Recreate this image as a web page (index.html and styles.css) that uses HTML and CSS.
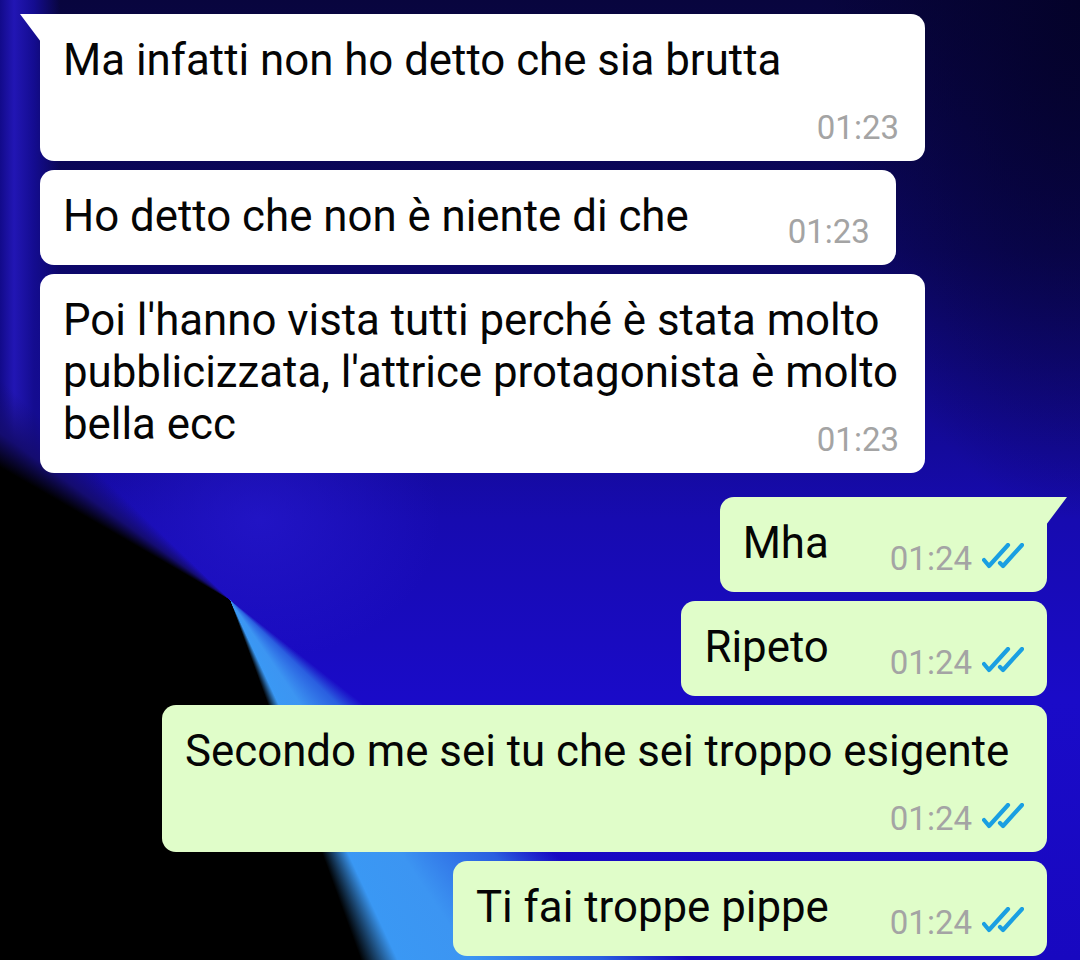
FILE: index.html
```html
<!DOCTYPE html>
<html lang="it">
<head>
    <meta charset="UTF-8">
    <meta name="viewport" content="width=device-width, initial-scale=1.0">
    <title>Chat</title>
    <link rel="stylesheet" href="styles.css">
</head>
<body>
    <div class="chat">
        <div class="row in">
            <div class="bubble tail stacked">
                <span class="text">Ma infatti non ho detto che sia brutta</span>
                <span class="meta"><span class="time">01:23</span></span>
            </div>
        </div>
        <div class="row in">
            <div class="bubble">
                <span class="text">Ho detto che non è niente di che</span>
                <span class="meta"><span class="time">01:23</span></span>
            </div>
        </div>
        <div class="row in">
            <div class="bubble">
                <span class="text">Poi l'hanno vista tutti perché è stata molto pubblicizzata, l'attrice protagonista è molto bella ecc</span>
                <span class="meta"><span class="time">01:23</span></span>
            </div>
        </div>

        <div class="row out first">
            <div class="bubble tail">
                <span class="text">Mha</span>
                <span class="meta"><span class="time">01:24</span><svg class="ticks" viewBox="0 0 42 26"><path d="M2 17 L7 23 L26 2"/><path d="M18 20 L21 23 L40 2"/></svg></span>
            </div>
        </div>
        <div class="row out">
            <div class="bubble">
                <span class="text">Ripeto</span>
                <span class="meta"><span class="time">01:24</span><svg class="ticks" viewBox="0 0 42 26"><path d="M2 17 L7 23 L26 2"/><path d="M18 20 L21 23 L40 2"/></svg></span>
            </div>
        </div>
        <div class="row out">
            <div class="bubble stacked">
                <span class="text">Secondo me sei tu che sei troppo esigente</span>
                <span class="meta"><span class="time">01:24</span><svg class="ticks" viewBox="0 0 42 26"><path d="M2 17 L7 23 L26 2"/><path d="M18 20 L21 23 L40 2"/></svg></span>
            </div>
        </div>
        <div class="row out">
            <div class="bubble">
                <span class="text">Ti fai troppe pippe</span>
                <span class="meta"><span class="time">01:24</span><svg class="ticks" viewBox="0 0 42 26"><path d="M2 17 L7 23 L26 2"/><path d="M18 20 L21 23 L40 2"/></svg></span>
            </div>
        </div>
    </div>
</body>
</html>
```

FILE: styles.css
```css
html, body {
    height: 100%;
}
body {
    margin: 0;
    overflow: hidden;
    font-family: Roboto, "Noto Sans", sans-serif;
    background:
        /* black area and light blue streak of the wallpaper */
        conic-gradient(from 0deg at 230px 600px,
            transparent 0deg 128deg,
            #2a5fe0 134deg,
            #3c95f2 146deg,
            #3a98f4 155deg,
            #000 160deg,
            #000 300deg,
            #140c70 306deg,
            transparent 314deg),
        radial-gradient(ellipse 180px 140px at 260px 520px, rgba(40, 26, 210, 0.6) 0%, transparent 100%),
        radial-gradient(ellipse 260px 520px at 1080px 0, #04022a 0%, transparent 100%),
        linear-gradient(90deg, #120a8a 0, #2216b4 14px, #140c90 34px, transparent 60px),
        linear-gradient(180deg, #08053e 0, #0c0764 250px, #170bb0 520px, #1a0bc8 700px, #1808c0 100%);
}
.chat {
    display: flex;
    flex-direction: column;
    gap: 9px;
    padding: 14px 33px 0 40px;
}
.row {
    display: flex;
}
.row.in {
    justify-content: flex-start;
}
.row.out {
    justify-content: flex-end;
}
.row.out.first {
    margin-top: 15px;
}

.bubble {
    position: relative;
    display: flow-root;
    max-width: 885px;
    box-sizing: border-box;
    padding: 20px 22px 17px 23px;
    border-radius: 14px;
    font-size: 43.8px;
    line-height: 52px;
    color: #050505;
}
.bubble.stacked {
    width: 885px;
}
.in .bubble { background: #fff; }
.out .bubble { background: #e0fdc9; }

/* the little triangle of the first bubble of a group */
.bubble.tail::before {
    content: "";
    position: absolute;
    top: 0;
    width: 21px;
    height: 28px;
    background: inherit;
}
.in .bubble.tail {
    border-top-left-radius: 0;
}
.in .bubble.tail::before {
    left: -20px;
    clip-path: polygon(0 0, 100% 0, 100% 100%);
}
.out .bubble.tail {
    border-top-right-radius: 0;
}
.out .bubble.tail::before {
    right: -20px;
    clip-path: polygon(0 0, 100% 0, 0 100%);
}

.meta {
    float: right;
    display: flex;
    align-items: center;
    margin-top: 26px;
    margin-right: 4px;
    font-size: 33px;
    line-height: 32px;
    color: #a4a4a4;
}
.in .meta { margin-left: 99px; }
.out .meta { margin-left: 61px; margin-right: 1px; }
.bubble.stacked .meta {
    float: none;
    justify-content: flex-end;
    margin-left: 0;
}
.ticks {
    width: 42px;
    height: 26px;
    margin-left: 10px;
    margin-top: -6px;
    fill: none;
    stroke: #1a9fe2;
    stroke-width: 4.2;
    stroke-linecap: round;
    stroke-linejoin: round;
}
```
